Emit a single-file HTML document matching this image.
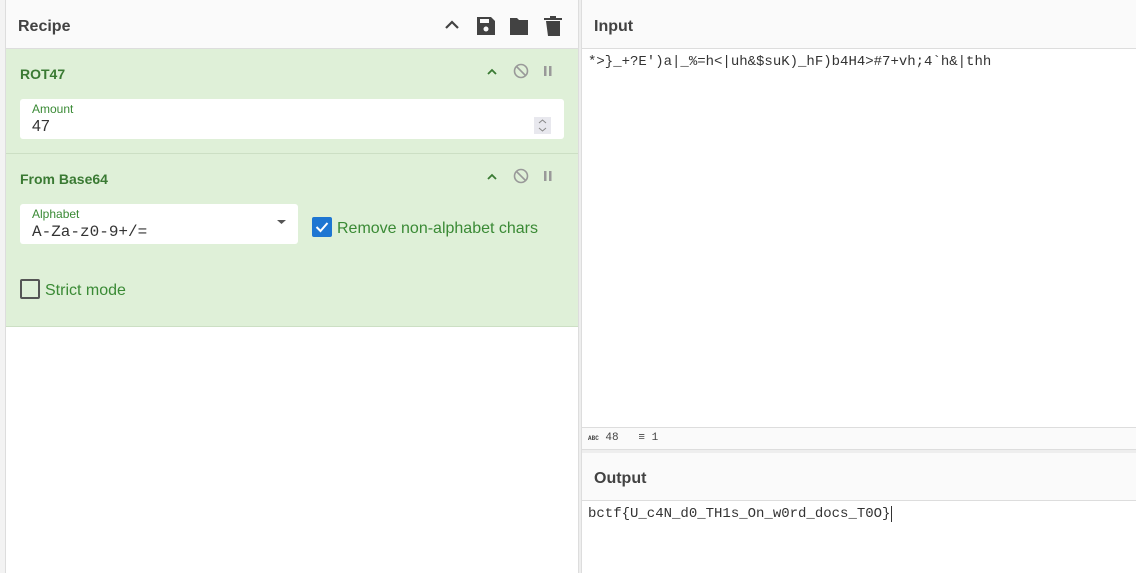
<!DOCTYPE html>
<html><head><style>
*{margin:0;padding:0;box-sizing:border-box}
body{width:1136px;height:573px;overflow:hidden;background:#fff;font-family:"Liberation Sans",sans-serif;position:relative}
.a{position:absolute}
.hdr{background:#fafafa;border-bottom:1px solid #ddd;font-size:16px;font-weight:bold;color:#424242}
.mono{font-family:"Liberation Mono",monospace}
.green{background:#dff0d8;border-bottom:1px solid #ccdfc4}
.opt{color:#3a7a33;font-weight:bold;font-size:14px}
.field{background:#fff;border-radius:3px}
.lbl{font-size:12px;color:#3a8a35}
</style></head><body>
<div class="a" style="left:0;top:0;width:6px;height:573px;background:#f3f3f3;border-right:1px solid #ddd"></div>
<div class="a" style="left:578px;top:0;width:4px;height:573px;background:#eee;border-left:1px solid #ddd;border-right:1px solid #ddd"></div>
<div class="a hdr" style="left:6px;top:0;width:572px;height:49px;padding:18px 12px 0">Recipe</div>
<svg class="a" style="left:440px;top:14px" width="130" height="24" viewBox="0 0 130 24">
<path d="M6 14l6-6 6 6" stroke="#424242" stroke-width="2.2" fill="none"/>
<path d="M37 3h14l4 4v14h-18z" fill="#424242"/><rect x="40" y="5" width="9" height="4" fill="#fafafa"/><circle cx="46" cy="15" r="2.5" fill="#fafafa"/>
<path d="M70 4h7l2 2h9v15h-18z" fill="#424242"/>
<path d="M106 7h14v15h-12zM104 4h18v2h-18zM110 2h6v2h-6z" fill="#424242"/>
</svg>
<div class="a green" style="left:6px;top:49px;width:572px;height:105px"></div>
<div class="a opt" style="left:20px;top:66px">ROT47</div>
<svg class="a" style="left:484px;top:61px" width="75" height="20">
<path d="M4 13l4-4 4 4" stroke="#3a7a33" stroke-width="1.8" fill="none"/>
<circle cx="37" cy="10" r="6.5" stroke="#999" stroke-width="1.6" fill="none"/><path d="M32.5 5.5l9 9" stroke="#999" stroke-width="1.6"/>
<rect x="60" y="5" width="2.5" height="10" fill="#999"/><rect x="65" y="5" width="2.5" height="10" fill="#999"/>
</svg>
<div class="a field" style="left:20px;top:99px;width:544px;height:40px"></div>
<div class="a lbl" style="left:32px;top:102px">Amount</div>
<div class="a" style="left:32px;top:118px;font-size:16px;color:#333">47</div>
<div class="a" style="left:534px;top:117px;width:17px;height:17px;background:#e8e8ee"></div>
<svg class="a" style="left:534px;top:117px" width="17" height="17"><path d="M5 6l3.5-3 3.5 3M5 11l3.5 3 3.5-3" stroke="#888" stroke-width="1" fill="none"/></svg>
<div class="a green" style="left:6px;top:154px;width:572px;height:173px"></div>
<div class="a opt" style="left:20px;top:171px">From Base64</div>
<svg class="a" style="left:484px;top:166px" width="75" height="20">
<path d="M4 13l4-4 4 4" stroke="#3a7a33" stroke-width="1.8" fill="none"/>
<circle cx="37" cy="10" r="6.5" stroke="#999" stroke-width="1.6" fill="none"/><path d="M32.5 5.5l9 9" stroke="#999" stroke-width="1.6"/>
<rect x="60" y="5" width="2.5" height="10" fill="#999"/><rect x="65" y="5" width="2.5" height="10" fill="#999"/>
</svg>
<div class="a field" style="left:20px;top:204px;width:278px;height:40px"></div>
<div class="a lbl" style="left:32px;top:207px">Alphabet</div>
<div class="a mono" style="left:32px;top:223px;font-size:16px;color:#333">A-Za-z0-9+/=</div>
<svg class="a" style="left:276px;top:218px" width="12" height="8"><path d="M1 2h9l-4.5 4z" fill="#555"/></svg>
<div class="a" style="left:312px;top:217px;width:20px;height:20px;background:#1e76d2;border-radius:2px"></div>
<svg class="a" style="left:312px;top:217px" width="20" height="20"><path d="M4.5 10l4 4 7-8" stroke="#fff" stroke-width="2" fill="none"/></svg>
<div class="a" style="left:337px;top:220px;font-size:16px;color:#3a8a35">Remove non-alphabet chars</div>
<div class="a" style="left:20px;top:279px;width:20px;height:20px;border:2px solid #555;border-radius:2px"></div>
<div class="a" style="left:45px;top:282px;font-size:16px;color:#3a8a35">Strict mode</div>
<div class="a hdr" style="left:582px;top:0;width:554px;height:49px;padding:18px 12px 0">Input</div>
<div class="a mono" style="left:588px;top:54px;font-size:14px;color:#333">*&gt;}_+?E')a|_%=h&lt;|uh&amp;$suK)_hF)b4H4&gt;#7+vh;4`h&amp;|thh</div>
<div class="a" style="left:582px;top:427px;width:554px;height:23px;background:#fafafa;border-top:1px solid #ddd;border-bottom:1px solid #ddd"></div>
<div class="a mono" style="left:588px;top:432px;font-size:11px;color:#444"><span style="font-size:6px;font-weight:bold">ABC</span> 48 &nbsp;&nbsp;≡ 1</div>
<div class="a" style="left:582px;top:450px;width:554px;height:3px;background:#eee"></div>
<div class="a hdr" style="left:582px;top:453px;width:554px;height:48px;padding:17px 12px 0">Output</div>
<div class="a mono" style="left:588px;top:506px;font-size:14px;color:#333">bctf{U_c4N_d0_TH1s_On_w0rd_docs_T0O}<span style="border-left:1px solid #333;margin-left:1px"></span></div>
</body></html>
